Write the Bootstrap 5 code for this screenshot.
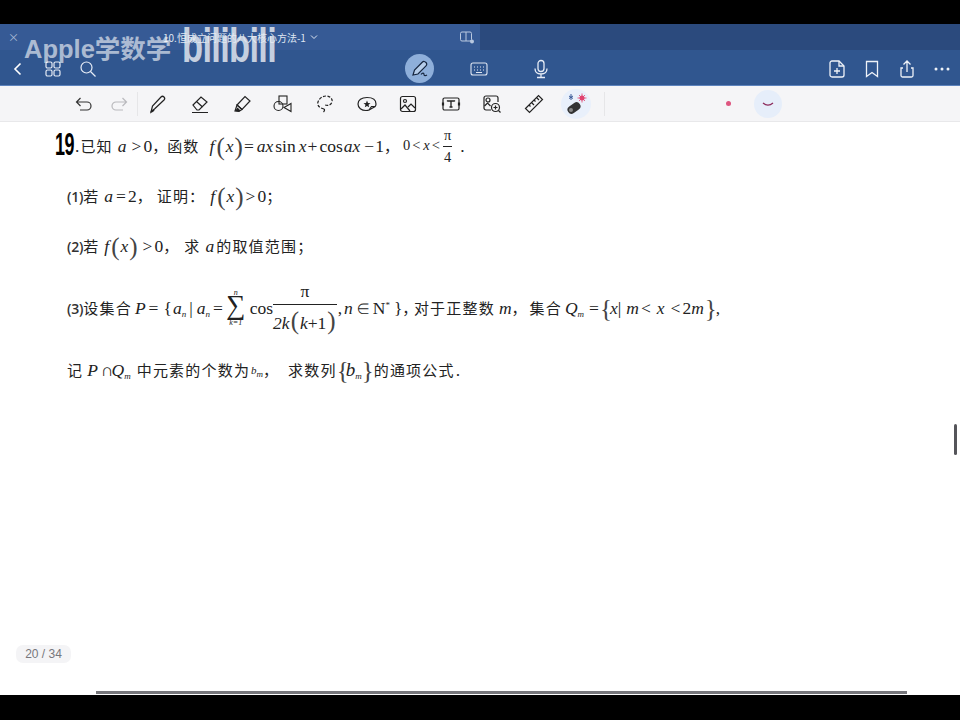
<!DOCTYPE html>
<html lang="zh">
<head>
<meta charset="UTF-8">
<title>恒成立问题</title>
<link href="https://cdn.jsdelivr.net/npm/bootstrap@5.3.0/dist/css/bootstrap.min.css" rel="stylesheet">
<style>
html, body { height: 720px; overflow: hidden; background: #000; }
body { font-family: "Noto Sans CJK SC", "Liberation Sans", sans-serif; }
.screen { height: 720px; position: relative; overflow: hidden; background: #000; padding: 24px 0 25px; }
.title-band { height: 26px; background: #2b4a7d; }
.title-left { width: 480px; background: #365a95; color: #dfe6f2; font-size: 10px; padding-left: 8px; }
.title-left .close-x { width: 155px; color: #a9bad6; font-size: 11px; }
.split-icon { margin-left: auto; margin-right: 6px; }
.nav-band { height: 36px; background: #30568f; border-bottom: 1px solid #5d83bd; padding-top: 2px; }
.nav-left { width: 106px; padding-left: 9px; gap: 17px; }
.pen-round { width: 29px; height: 29px; border-radius: 50%; background: #8eafda; margin-left: 299px; }
.kbd-slot { margin-left: 36px; }
.mic-slot { margin-left: 45px; }
.nav-right { margin-left: auto; gap: 17px; padding-right: 9px; }
.tool-band { height: 36px; background: #f5f5f7; border-bottom: 1px solid #e8e8ea; padding-left: 75px; }
.tool-undo { width: 35px; flex: none; }
.tool-redo { width: 27px; flex: none; }
.tool-slot { width: 41.8px; flex: none; }
.tool-rule { width: 1px; height: 24px; background: #e6e6e8; margin-right: 10px; flex: none; }
.tool-rule.end-rule { margin-left: 13px; margin-right: 7px; }
.remote-slot { background: #e9f0fb; border-radius: 50%; width: 30px; height: 30px; margin-left: -5px; flex: none; }
.red-dot { width: 5px; height: 5px; background: #d9386a; border-radius: 50%; margin-left: 114px; opacity: .85; }
.curve-round { width: 28px; height: 28px; border-radius: 50%; background: #e6eefa; margin-left: 23px; }
.sheet { height: 573px; background: #fff; position: relative; padding: 5px 0 0 55px; color: #222; font-size: 15px; }
.math-line { display: flex; align-items: center; white-space: nowrap; height: 38px; }
.math-line + .math-line { margin-top: 12px; }
.math-line.tall { height: 50px; }
.math-line.gap-top { margin-top: 18px; }
.sub-row { padding-left: 12px; }
.hand-num { font-family: "Liberation Sans", sans-serif; font-weight: 700; font-size: 29px; color: #000; letter-spacing: -1px; width: 20px; display: inline-block; transform: scale(.62, 1.05); transform-origin: left center; }
.m { font-family: "Liberation Serif", serif; font-size: 17.5px; }
.mi { font-family: "Liberation Serif", serif; font-size: 17.5px; font-style: italic; }
.mi sub, .m sub { font-size: 9px; bottom: -.35em; }
.m sup { font-size: 9px; top: -.6em; }
.tiny-math { font-size: 14.5px; }
.small-b { font-size: 11px; }
.big-b { font-size: 19px; }
.paren { font-family: "Liberation Serif", serif; font-size: 25px; font-weight: 300; line-height: 1; color: #444; margin: 0 1px; }
.paren.tight { margin: 0; }
.num-tag { font-family: "Open Sans", sans-serif; font-size: 14px; font-weight: 600; color: #333; letter-spacing: -.2px; }
.frac { display: inline-flex; flex-direction: column; align-items: center; line-height: 1; }
.frac > span:first-child { border-bottom: 1px solid #222; padding: 0 1px 3px; width: 100%; text-align: center; }
.frac > span:last-child { padding-top: 3px; }
.sigma { display: inline-flex; flex-direction: column; align-items: center; line-height: 1; font-family: "Liberation Serif", serif; width: 22px; }
.sigma b { font-size: 27px; font-weight: 400; line-height: 22px; transform: translateY(-3px); }
.sigma i { font-size: 8px; }
.hz { letter-spacing: 1.2px; }
.half-punct { font-feature-settings: "halt"; }
.sp1 { margin-left: 1px; } .sp2 { margin-left: 2px; } .sp3 { margin-left: 3px; } .sp4 { margin-left: 4px; }
.sp5 { margin-left: 5px; } .sp6 { margin-left: 6px; } .sp8 { margin-left: 8px; } .sp10 { margin-left: 10px; }
.back2 { margin-left: -2px; } .back3 { margin-left: -3px; }
.page-pill { position: absolute; left: 16px; top: 523px; width: 55px; height: 18px; background: #f4f4f6; border-radius: 7px; color: #77777c; font-family: "Liberation Sans", sans-serif; font-size: 12px; line-height: 18px; text-align: center; }
.v-scroll { position: absolute; right: 3px; top: 302px; width: 3px; height: 31px; background: #55555a; border-radius: 2px; }
.h-scroll { position: absolute; left: 96px; bottom: 1px; width: 811px; height: 3px; background: #77777c; }
.mark-apple { position: absolute; left: 24px; top: 31px; font-family: "Liberation Sans", "Noto Sans CJK SC", sans-serif; font-weight: 700; font-size: 25.5px; line-height: 36px; color: rgba(255,255,255,.6); }
.mark-bili { position: absolute; left: 182px; top: 21px; font-family: "Liberation Sans", sans-serif; font-weight: 700; font-size: 48px; line-height: 50px; letter-spacing: -1px; color: rgba(232,236,242,.82); transform: scaleX(.72); transform-origin: left center; }
</style>
</head>
<body>
<div class="screen">
  <div class="title-band d-flex">
    <div class="title-left d-flex align-items-center">
      <span class="close-x">×</span>
      <span>10.恒成立问题的八大核心方法-1</span>
      <svg class="ms-1" width="8" height="6" viewBox="0 0 8 6" fill="none" stroke="#dfe6f2" stroke-width="1"><path d="M1 1.5 4 4.500 7 1.500"/></svg>
      <svg class="split-icon" width="14" height="13" viewBox="0 0 14 13" fill="none" stroke="#b9c8e0" stroke-width="1"><rect x=".5" y="1" width="11" height="9" rx="1.500"/><path d="M6 1v9"/><circle cx="12" cy="10.500" r="2" fill="#b9c8e0" stroke="none"/></svg>
    </div>
  </div>

  <div class="nav-band d-flex align-items-center">
    <div class="nav-left d-flex align-items-center">
      <svg width="18" height="18" viewBox="0 0 18 18" fill="none" stroke="#fff" stroke-width="1.600"><path d="M11.500 3.500 6 9l5.500 5.500"/></svg>
      <svg width="18" height="18" viewBox="0 0 18 18" fill="none" stroke="#e6ecf6" stroke-width="1.200"><rect x="2" y="2" width="6" height="6" rx="1.500"/><rect x="10" y="2" width="6" height="6" rx="1.500"/><rect x="2" y="10" width="6" height="6" rx="1.500"/><rect x="10" y="10" width="6" height="6" rx="1.500"/></svg>
      <svg width="18" height="18" viewBox="0 0 18 18" fill="none" stroke="#e6ecf6" stroke-width="1.200"><circle cx="7.500" cy="7.500" r="5.500"/><path d="m11.500 11.500 5 5"/></svg>
    </div>
    <div class="pen-round d-flex align-items-center justify-content-center">
      <svg width="20" height="20" viewBox="0 0 20 20" fill="none" stroke="#16263f" stroke-width="1.200"><path d="M3 16 4.500 11 12.500 3c1-1 2.500-.5 3.500.5s1 2.300 0 3.300L8 15Z" fill="#b6cdea"/><path d="M11 15.500c1.500-2 3-1.500 3 0s1.500 1.500 3 .5"/></svg>
    </div>
    <div class="kbd-slot d-flex">
      <svg width="18" height="16" viewBox="0 0 18 16" fill="none" stroke="#dfe6f2" stroke-width="1.100"><rect x="1" y="2" width="16" height="12" rx="2"/><path d="M4 6h1M7 6h1M10 6h1M13 6h1M4 9h1M7 9h1M10 9h1M13 9h1M6 11.500h6"/></svg>
    </div>
    <div class="mic-slot d-flex">
      <svg width="16" height="20" viewBox="0 0 16 20" fill="none" stroke="#e6ecf6" stroke-width="1.300"><rect x="5" y="1.500" width="6" height="11" rx="3"/><path d="M2 9.500c0 3.500 2.500 5.500 6 5.500s6-2 6-5.500M8 15v3M4 18.500h8"/></svg>
    </div>
    <div class="nav-right d-flex align-items-center">
      <svg width="18" height="20" viewBox="0 0 18 20" fill="none" stroke="#eef2f8" stroke-width="1.300"><path d="M4 2h7l5 5v9a2 2 0 0 1-2 2H4a2 2 0 0 1-2-2V4a2 2 0 0 1 2-2Z"/><path d="M11 2v5h5M9 9v6M6 12h6"/></svg>
      <svg width="18" height="20" viewBox="0 0 18 20" fill="none" stroke="#eef2f8" stroke-width="1.300"><path d="M3.500 2.500h11v15L9 13.500l-5.500 4Z"/></svg>
      <svg width="18" height="20" viewBox="0 0 18 20" fill="none" stroke="#eef2f8" stroke-width="1.300"><path d="M9 13V2.500M5.500 5.500 9 2l3.500 3.500M5 9H3v7.500a1.500 1.500 0 0 0 1.500 1.500h9a1.500 1.500 0 0 0 1.500-1.500V9h-2"/></svg>
      <svg width="18" height="20" viewBox="0 0 18 20" fill="#eef2f8"><circle cx="3" cy="10" r="1.500"/><circle cx="9" cy="10" r="1.500"/><circle cx="15" cy="10" r="1.500"/></svg>
    </div>
  </div>

  <div class="tool-band d-flex align-items-center">
    <div class="tool-undo d-flex">
      <svg width="18" height="16" viewBox="0 0 18 16" fill="none" stroke="#333" stroke-width="1.200"><path d="M5.500 2 1.500 6l4 4M1.500 6H12a4 4 0 0 1 0 8H5"/></svg>
    </div>
    <div class="tool-redo d-flex">
      <svg width="18" height="16" viewBox="0 0 18 16" fill="none" stroke="#b9b9bd" stroke-width="1.200"><path d="M12.500 2l4 4-4 4M16.500 6H6a4 4 0 0 0 0 8h7"/></svg>
    </div>
    <div class="tool-rule"></div>
    <div class="tool-slot d-flex">
      <svg width="20" height="20" viewBox="0 0 20 20" fill="none" stroke="#222" stroke-width="1.200"><path d="M3 18 4.500 12 13 3c1-1 2-1 3 0s1 2 0 3l-9 8.500Z"/><path d="M3 18l3-2" stroke-width="2"/></svg>
    </div>
    <div class="tool-slot d-flex">
      <svg width="20" height="20" viewBox="0 0 20 20" fill="none" stroke="#222" stroke-width="1.200"><path d="M3 11 11 3l6 5-8 8H7Z"/><path d="M6.500 7.500l6 5.500M2 18.500h16"/></svg>
    </div>
    <div class="tool-slot d-flex">
      <svg width="20" height="20" viewBox="0 0 20 20" fill="none" stroke="#222" stroke-width="1.200"><path d="M5 11 13 2.500l5 4.500-8 8.500Z"/><path d="M5 11l5 4.500-3 2-4-.5Z"/><path d="M3 17l4 .5 1.500-1-3-3Z" fill="#222" stroke="none"/></svg>
    </div>
    <div class="tool-slot d-flex">
      <svg width="20" height="20" viewBox="0 0 20 20" fill="none" stroke="#222" stroke-width="1.100"><rect x="6" y="2" width="8" height="8"/><circle cx="5.500" cy="12" r="4.500"/><path d="M18 9.500v8l-7-4Z"/></svg>
    </div>
    <div class="tool-slot d-flex">
      <svg width="20" height="20" viewBox="0 0 20 20" fill="none" stroke="#222" stroke-width="1.200" stroke-dasharray="3 1.500"><path d="M9 15c-5-1-7-4-6-7s4-6 8-6 7 3 6 6-4 4-7 3"/><path d="M9 15c1 1 .5 2-.5 3" stroke-dasharray="none"/></svg>
    </div>
    <div class="tool-slot d-flex">
      <svg width="20" height="18" viewBox="0 0 20 18" fill="none" stroke="#222" stroke-width="1.200"><path d="M12 15c-1 .5-2 .5-3 .5-4.500 0-8-2.500-8-6.500S4.500 2.500 10 2.500 19 5 19 9c0 1-.3 1.800-.8 2.500Z"/><path d="m10 5.500 1 2.500 2.500.2-2 1.600.7 2.500L10 11l-2.200 1.300.7-2.500-2-1.600L9 8Z" fill="#222" stroke="none"/><path d="m12 15 2.500-3.500 3.500 0"/></svg>
    </div>
    <div class="tool-slot d-flex">
      <svg width="18" height="18" viewBox="0 0 18 18" fill="none" stroke="#222" stroke-width="1.200"><rect x="1.500" y="1.500" width="15" height="15" rx="2"/><circle cx="6" cy="6" r="1.500"/><path d="m2 14 4-4 5 6M9 12l3-3 4 4"/></svg>
    </div>
    <div class="tool-slot d-flex">
      <svg width="20" height="16" viewBox="0 0 20 16" fill="none" stroke="#222" stroke-width="1.200"><rect x="2" y="2" width="16" height="12" rx="1.500"/><path d="M6.500 5.500V5h7v.5M10 5v6M8.500 11h3" stroke-width="1.300"/><path d="M2 6.500v3M18 6.500v3" stroke-width="2.200"/></svg>
    </div>
    <div class="tool-slot d-flex">
      <svg width="20" height="20" viewBox="0 0 20 20" fill="none" stroke="#222" stroke-width="1.200"><path d="M9 16H4a2 2 0 0 1-2-2V4a2 2 0 0 1 2-2h10a2 2 0 0 1 2 2v4"/><circle cx="6" cy="6" r="2"/><path d="m2.500 12 3-3 3 3"/><circle cx="13.500" cy="13.500" r="4"/><path d="M11.500 13.500h4M13.500 11.500v4M16.500 16.500l2 2"/></svg>
    </div>
    <div class="tool-slot d-flex">
      <svg width="20" height="20" viewBox="0 0 20 20" fill="none" stroke="#222" stroke-width="1.200"><path d="M1.500 14.500 14.500 1.500l4 4-13 13Z"/><path d="m5 11 1.500 1.500M7.500 8.500 10 11M10 6l1.500 1.500M12.500 3.500 15 6"/></svg>
    </div>
    <div class="remote-slot d-flex align-items-center justify-content-center">
      <svg width="22" height="24" viewBox="0 0 22 24"><rect x="2" y="12" width="14" height="8" rx="4" transform="rotate(-35 9 16)" fill="#333"/><circle cx="6" cy="18" r="2" fill="#888"/><path d="M6 2v6M4 4l4 2.500M4 6.500 8 4" stroke="#3b5b99" fill="none"/><circle cx="17" cy="6" r="2.500" fill="#e0436f"/><path d="M17 1.500v9M12.500 6h9M14 3l6 6M20 3l-6 6" stroke="#e0436f" stroke-width=".8"/></svg>
    </div>
    <div class="tool-rule end-rule"></div>
    <div class="red-dot"></div>
    <div class="curve-round d-flex align-items-center justify-content-center">
      <svg width="12" height="6" viewBox="0 0 12 6" fill="none" stroke="#8c2b5c" stroke-width="1.300"><path d="M1 2c3 2.500 7 2.500 10 0"/></svg>
    </div>
  </div>

  <div class="sheet">
    <div class="math-line">
      <span class="hand-num">19</span>
      <span class="m">.</span><span class="hz sp1">已知</span><span class="mi sp5">a</span><span class="m sp5">&gt;</span><span class="m sp2">0</span><span>，</span><span class="hz">函数</span>
      <span class="mi sp10">f</span><span class="paren sp2">(</span><span class="mi">x</span><span class="paren">)</span><span class="m">=</span><span class="mi sp3">ax</span><span class="m sp2">sin</span><span class="mi sp3">x</span><span class="m sp1">+</span><span class="m sp2">cos</span><span class="mi sp1">ax</span><span class="m sp4">−</span><span class="m sp1">1</span><span>，</span>
      <span class="m tiny-math sp4">0</span><span class="m tiny-math sp2">&lt;</span><span class="mi tiny-math sp3">x</span><span class="m tiny-math sp2">&lt;</span>
      <span class="frac m tiny-math sp3"><span>π</span><span>4</span></span><span class="m sp8">.</span>
    </div>
    <div class="math-line sub-row">
      <span class="num-tag">(1)</span><span>若</span><span class="mi sp6">a</span><span class="m sp3">=</span><span class="m sp2">2</span><span>，</span><span class="hz sp5">证明：</span>
      <span class="mi sp5">f</span><span class="paren sp2">(</span><span class="mi">x</span><span class="paren">)</span><span class="m sp1">&gt;</span><span class="m sp2">0</span><span>；</span>
    </div>
    <div class="math-line sub-row">
      <span class="num-tag">(2)</span><span>若</span><span class="mi sp6">f</span><span class="paren sp2">(</span><span class="mi">x</span><span class="paren">)</span><span class="m sp4">&gt;</span><span class="m sp2">0</span><span>，</span><span class="hz sp6">求</span><span class="mi sp5">a</span><span class="hz sp2">的取值范围；</span>
    </div>
    <div class="math-line tall gap-top sub-row">
      <span class="num-tag">(3)</span><span class="hz">设集合</span><span class="mi sp3">P</span><span class="m sp3">=</span><span class="m sp5">{</span><span class="mi sp1">a<sub>n</sub></span><span class="m sp3">|</span><span class="mi sp4">a<sub>n</sub></span><span class="m sp3">=</span>
      <span class="sigma sp2"><i>n</i><b>∑</b><i>k=1</i></span><span class="m sp3">cos</span>
      <span class="frac m"><span>π</span><span><i>2k</i><span class="paren">(</span><i>k</i>+1<span class="paren">)</span></span></span>
      <span class="m sp1">,</span><span class="mi sp2">n</span><span class="m sp3">∈</span><span class="m sp3">N<sup>*</sup></span><span class="m sp4">}</span><span class="half-punct">，</span><span class="hz sp4">对于正整数</span><span class="mi sp4">m</span><span>，</span><span class="hz sp3">集合</span><span class="mi sp3">Q<sub>m</sub></span><span class="m sp5">=</span><span class="paren">{</span><span class="mi back3">x</span><span class="m">|</span><span class="mi sp5">m</span><span class="m sp2">&lt;</span><span class="mi sp6">x</span><span class="m sp6">&lt;</span><span class="m sp2">2</span><span class="mi">m</span><span class="paren">}</span><span class="m back2">,</span>
    </div>
    <div class="math-line gap-top sub-row">
      <span class="hz">记</span><span class="mi sp4">P</span><span class="m sp3">∩</span><span class="mi back2">Q<sub>m</sub></span><span class="hz sp6">中元素的个数为</span><span class="mi small-b sp1">b<sub>m</sub></span><span>，</span><span class="hz sp10">求数列</span><span class="paren tight">{</span><span class="mi big-b back3">b<sub>m</sub></span><span class="paren tight">}</span><span class="hz">的通项公式</span><span class="m sp1">.</span>
    </div>
    <div class="page-pill">20 / 34</div>
    <div class="v-scroll"></div>
    <div class="h-scroll"></div>
  </div>

  <div class="mark-apple">Apple学数学</div>
  <div class="mark-bili">bilibili</div>
</div>
<script src="https://cdn.jsdelivr.net/npm/bootstrap@5.3.0/dist/js/bootstrap.bundle.min.js"></script>
</body>
</html>
